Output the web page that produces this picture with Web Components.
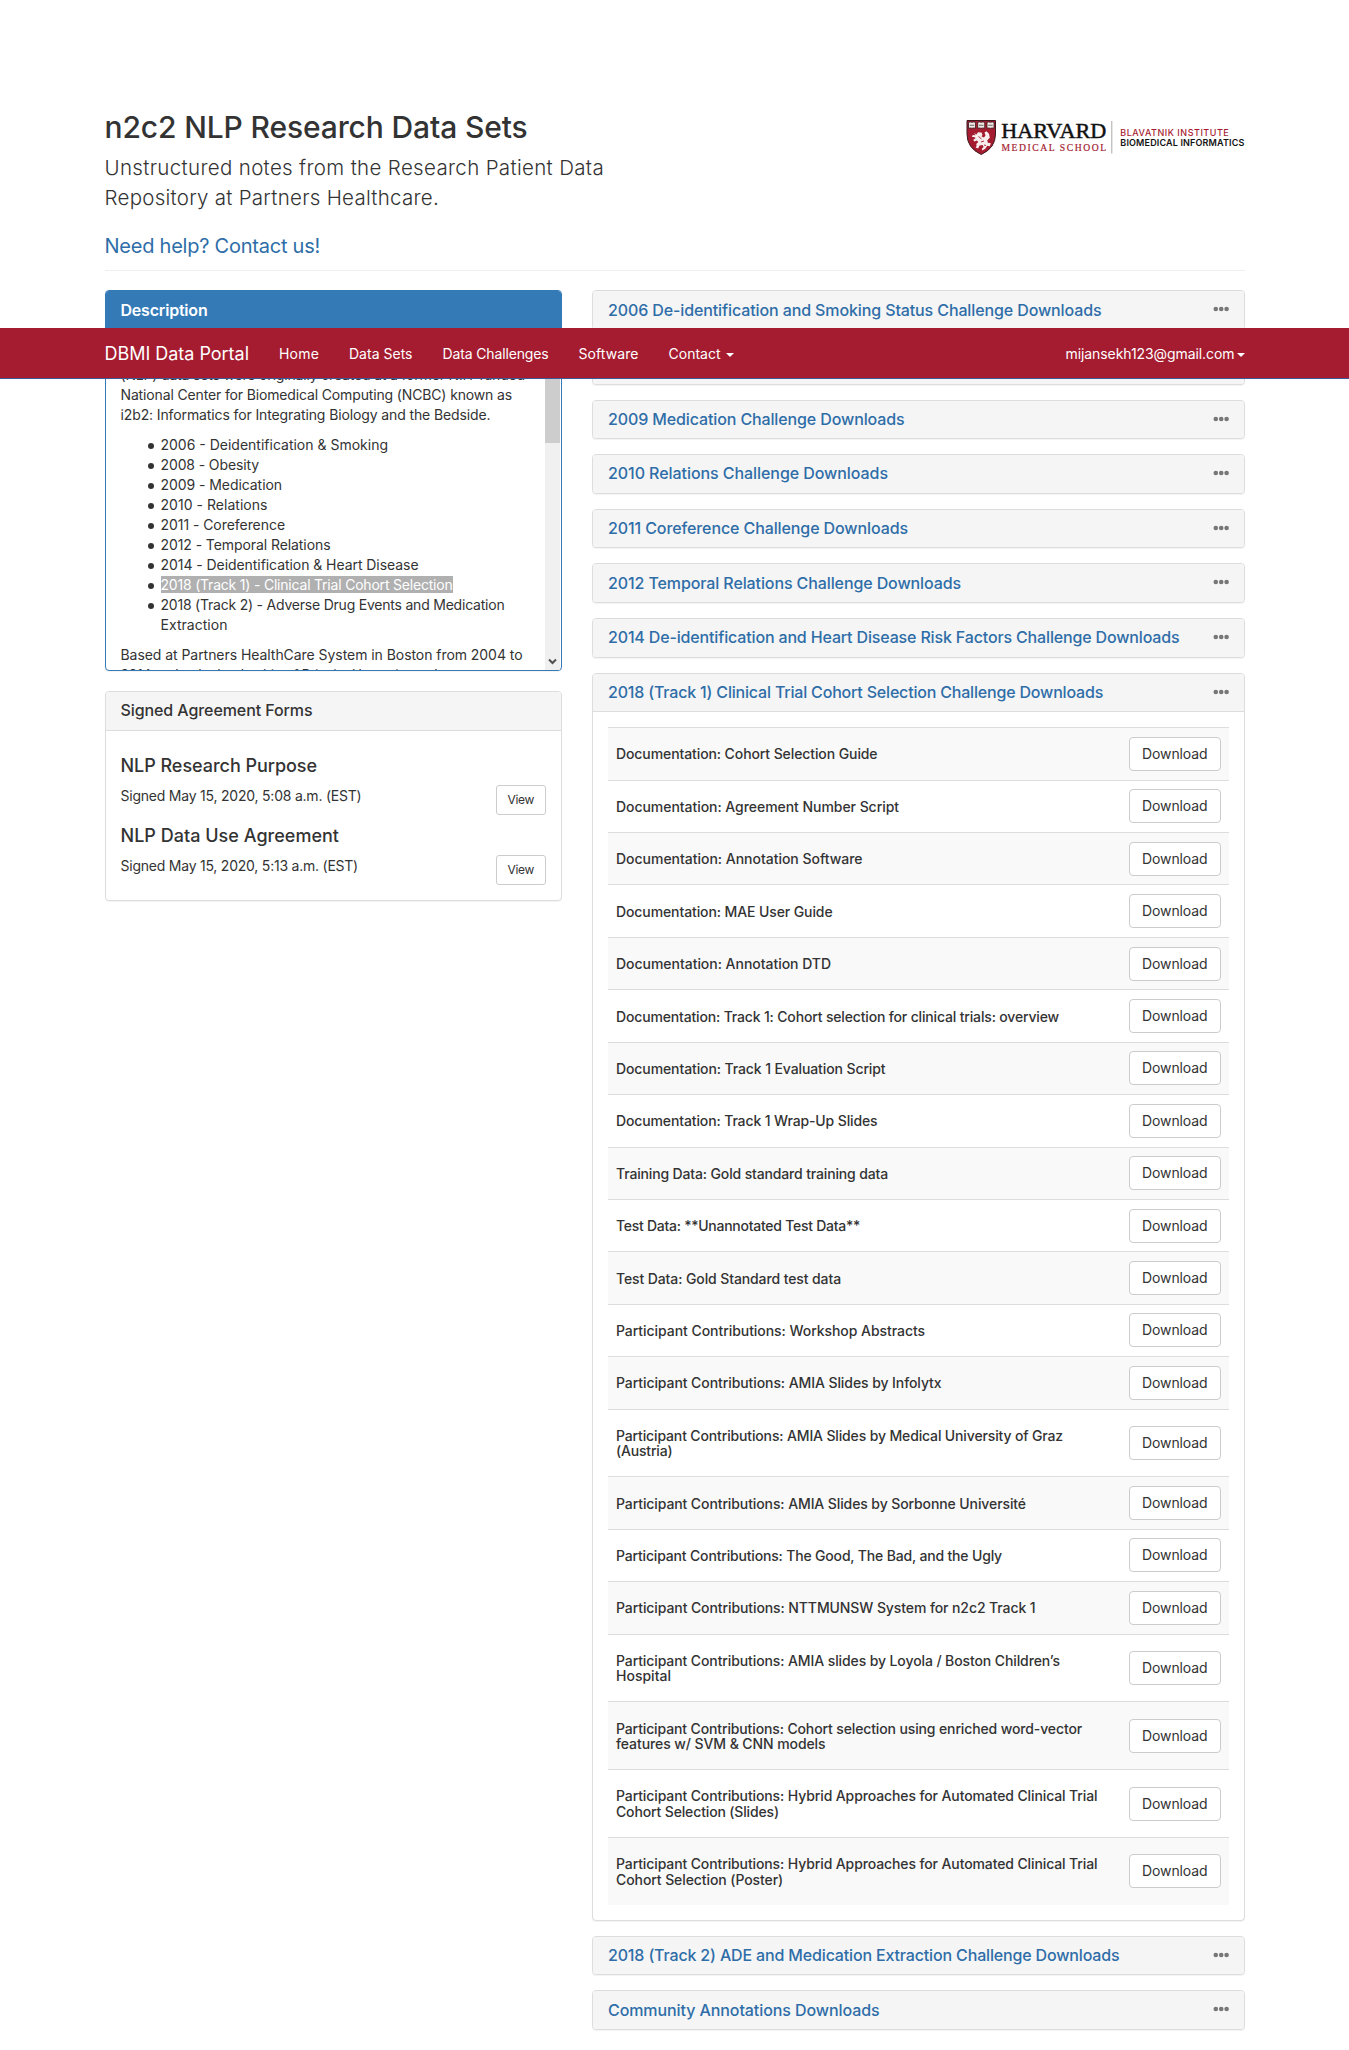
<!DOCTYPE html>
<html lang="en">
<head>
<meta charset="utf-8">
<title>DBMI Data Portal</title>
<style>
html,body{margin:0;padding:0;background:#fff}
body{font:14px/20px Inter,"Liberation Sans",sans-serif;color:#333;height:2050px;overflow:hidden}
</style>
</head>
<body>
<portal-page></portal-page>
<script>
const define = (name, html, setup) => customElements.define(name, class extends HTMLElement {
  connectedCallback() {
    if (this.shadowRoot) return;
    const root = this.attachShadow({mode: 'open'});
    root.innerHTML = typeof html === 'function' ? html(this) : html;
    if (setup) setup(this, root);
  }
});

/* One line of type tracked to a given advance width. */
define('fit-text', '<style>:host{display:inline;white-space:nowrap}</style><slot></slot>', el => {
  const target = parseFloat(el.getAttribute('w')) - 1;
  const natural = el.getBoundingClientRect().width;
  const n = el.textContent.length;
  if (target && natural) el.style.letterSpacing = ((target - natural) / n).toFixed(4) + 'px';
});

define('hms-logo', `<style>:host{display:block;width:278.500px;height:36px}svg{display:block;overflow:visible}</style>
<svg width="278.500" height="36" viewBox="0 0 278.500 36">
 <path d="M1 .5H29.500V14Q29.500 28 15.200 34.500Q1 28 1 14Z" fill="#a51c30" stroke="#3c1a20" stroke-width="1"/>
 <g fill="#f3e9e6" stroke="#33151a" stroke-width=".8">
  <path d="M2.500 2.300q1.800-.7 3.500 0q1.700-.7 3.500 0v6q-1.700-.7-3.500 0q-1.700-.7-3.500 0z"/>
  <path d="M11.700 2.300q1.800-.7 3.500 0q1.700-.7 3.500 0v6q-1.700-.7-3.500 0q-1.700-.7-3.500 0z"/>
  <path d="M21 2.300q1.800-.7 3.500 0q1.700-.7 3.500 0v6q-1.700-.7-3.500 0q-1.700-.7-3.500 0z"/></g>
 <path d="M3.800 5.300h4.500M13 5.300h4.500M22.200 5.300h4.500" stroke="#666" stroke-width="1.100"/>
 <path d="M8 13l2.500 1.500 1.500-2.300 3.500.3 1 2.300-1 1.800 2.500.8 1.500-2-1-3 2-1.200 2.500 2.500.8 4-2.500 2.500.5 2.500 3 .5-1 3-2.500-.5-2 3-3 1.800-.5-1.800 1.800-1.800-1-2-3 .5-1.500 3-2.500-.8 1-1.500-.3-2.200 2-2-1.500-1.500-2.300 1-1.300-1.500 2.500-1.800-1.800-1.200-2 .2.800-2.100 3 .2z" fill="#f8eeee"/>
 <path d="M12.500 16.500l3 2.500M15 22l3-1M18 25l2 .5" stroke="#a51c30" stroke-width=".9"/>
 <g font-family="'Liberation Serif',serif">
  <text x="35.300" y="17.500" font-size="20.500" textLength="105" lengthAdjust="spacingAndGlyphs" fill="#111" stroke="#111" stroke-width=".45">HARVARD</text>
  <text x="35.500" y="30.500" font-size="9.600" textLength="104.500" fill="#a51c30" stroke="#a51c30" stroke-width=".2">MEDICAL SCHOOL</text></g>
 <path d="M145.800 1V33.500" stroke="#aaa"/>
 <g font-family="Inter,sans-serif" font-size="9">
  <text x="154.300" y="15.800" textLength="108.500" fill="#a51c30" font-weight="500">BLAVATNIK INSTITUTE</text>
  <text x="154.300" y="25.600" textLength="124" fill="#111" font-weight="600">BIOMEDICAL INFORMATICS</text></g>
</svg>`);

define('page-intro', `<style>
:host{display:block;border-bottom:1px solid #eee;height:158.600px;padding-top:111px}
.row{display:flex;justify-content:space-between;align-items:flex-start}
h1{font-weight:500;font-size:30px;line-height:33px;margin:0 0 9px}
p{margin:0;font-size:20.500px;line-height:30px;font-weight:300}
a{display:block;margin-top:20.500px;font-size:20px;line-height:24px;color:#2e6da8;font-weight:400}
hms-logo{margin-top:8.500px}
</style>
<div class="row"><div>
<h1><fit-text w="424">n2c2 NLP Research Data Sets</fit-text></h1>
<p><fit-text w="500.500">Unstructured notes from the Research Patient Data</fit-text><br><fit-text w="335.500">Repository at Partners Healthcare.</fit-text></p>
<a><fit-text w="216.500">Need help? Contact us!</fit-text></a>
</div><hms-logo></hms-logo></div>`);

define('nav-link', el => `<style>
:host{display:flex;align-items:center;color:#fff;gap:${el.getAttribute('gap') || 5}px}
i{width:0;height:0;border:4px solid transparent;border-top-color:#fff;border-bottom:0;margin-top:1px}
</style><slot></slot>${el.hasAttribute('caret') ? '<i></i>' : ''}`);

define('portal-nav', `<style>
:host{display:block;position:absolute;left:0;right:0;top:328px;z-index:5;height:50px;background:#a51c30;border-bottom:1px solid #3d5a98}
.in{display:flex;width:1140px;height:50px;box-sizing:border-box;padding-top:2px;margin:0 auto;align-items:center;gap:30px}
.brand{font-size:18px}
.user{margin-left:auto}
</style>
<div class="in">
<nav-link class="brand"><fit-text w="145.500">DBMI Data Portal</fit-text></nav-link>
<nav-link><fit-text w="41">Home</fit-text></nav-link>
<nav-link><fit-text w="64.500">Data Sets</fit-text></nav-link>
<nav-link><fit-text w="107">Data Challenges</fit-text></nav-link>
<nav-link><fit-text w="61">Software</fit-text></nav-link>
<nav-link caret><fit-text w="53">Contact</fit-text></nav-link>
<nav-link class="user" caret gap="2"><fit-text w="170">mijansekh123@gmail.com</fit-text></nav-link>
</div>`);

define('ui-panel', el => `<style>
:host{display:block;box-sizing:border-box;border:1px solid #ddd;border-radius:4px;background:#fff;box-shadow:0 1px 1px rgba(0,0,0,.05);overflow:hidden}
:host([primary]){border-color:#337ab7}
header{display:flex;justify-content:space-between;align-items:flex-start;box-sizing:content-box;padding:10.250px 15px 9.750px;background:#f5f5f5;font-size:16px;line-height:17.600px;height:17.610px;font-weight:500}
:host([open]) header{border-bottom:1px solid #ddd}
:host([open]:not([link]):not([primary])) header{padding:9.750px 15px 10.250px}
:host([primary]) header{background:#337ab7;border-color:#337ab7;color:#fff;font-weight:600}
:host([link]) header{color:#2e6da8}
svg{display:block;margin-top:4.700px}
</style><header><slot name="title"></slot>${el.hasAttribute('link') ? '<svg width="16" height="6"><g fill="#777"><circle cx="2.800" cy="3" r="2.300"/><circle cx="8.200" cy="3" r="2.300"/><circle cx="13.600" cy="3" r="2.300"/></g></svg>' : ''}</header><slot></slot>`);

define('ui-button', `<style>
:host{display:block;box-sizing:border-box;border:1px solid #ccc;border-radius:4px;background:#fff;padding:6px 12px;font-size:14px;line-height:20px;height:34px}
:host([small]){font-size:12px;line-height:18px;padding:5px 11px;height:30px;border-radius:3px}
</style><slot></slot>`);

define('scroll-bar', `<style>
:host{display:flex;flex-direction:column;width:15px;margin-right:1px;background:#f0f0f0;align-items:center}
.thumb{width:15px;height:96px;margin-top:17px;background:#cdcdcd}
svg{margin-top:auto;margin-bottom:4.500px}
</style><div class="thumb"></div><svg width="9" height="7"><path d="M1 1.500L4.500 5 8 1.500" fill="none" stroke="#505050" stroke-width="2"/></svg>`);

define('description-body', `<style>
:host{display:flex;height:339.800px;overflow:hidden}
.text{flex:1;padding:15px;min-width:0}
p{margin:0 0 10px}
ul{margin:0 0 10px;padding-left:40px;list-style:none}
li::before{content:"";display:inline-block;width:6px;height:6px;border-radius:50%;background:#333;margin:0 7px 1.500px -13px}
mark{background:#b0b0b0;color:#fff}
</style>
<div class="text">
<p><br>
<fit-text w="405.500">(NLP) data sets were originally created at a former NIH-funded</fit-text><br>
<fit-text w="392.500">National Center for Biomedical Computing (NCBC) known as</fit-text><br>
<fit-text w="371">i2b2: Informatics for Integrating Biology and the Bedside.</fit-text></p>
<ul>
<li><fit-text w="228.500">2006 - Deidentification &amp; Smoking</fit-text></li>
<li><fit-text w="99.500">2008 - Obesity</fit-text></li>
<li><fit-text w="122.500">2009 - Medication</fit-text></li>
<li><fit-text w="108">2010 - Relations</fit-text></li>
<li><fit-text w="125.500">2011 - Coreference</fit-text></li>
<li><fit-text w="171">2012 - Temporal Relations</fit-text></li>
<li><fit-text w="259">2014 - Deidentification &amp; Heart Disease</fit-text></li>
<li><mark><fit-text w="293">2018 (Track 1) - Clinical Trial Cohort Selection</fit-text></mark></li>
<li><fit-text w="345">2018 (Track 2) - Adverse Drug Events and Medication</fit-text><br><fit-text w="68">Extraction</fit-text></li>
</ul>
<p><fit-text w="403">Based at Partners HealthCare System in Boston from 2004 to</fit-text><br>
<fit-text w="347">2014 under the leadership of Principal Investigator Isaac</fit-text></p>
</div><scroll-bar></scroll-bar>`);

define('signed-form', `<style>
:host{display:block;height:70px}
h4{font-weight:500;font-size:18px;line-height:19.800px;margin:0 0 9.600px}
div{display:flex;justify-content:space-between;align-items:flex-start}
span{padding-top:.4px}
</style><h4><slot name="name"></slot></h4><div><span><slot></slot></span><ui-button small><fit-text w="27.500">View</fit-text></ui-button></div>`);

define('download-row', `<style>
:host{display:flex;align-items:center;justify-content:space-between;border-top:1px solid #ddd;padding:8px;font-weight:500;line-height:15.400px}
:host([striped]){background:#f9f9f9}
.t{padding:10.210px 0 9.810px}
ui-button{font-weight:400}
</style><div class="t"><slot></slot></div><ui-button><fit-text w="66.500">Download</fit-text></ui-button>`);

const rows = [
 [['Documentation: Cohort Selection Guide',262.5]],
 [['Documentation: Agreement Number Script',284]],
 [['Documentation: Annotation Software',247.5]],
 [['Documentation: MAE User Guide',217.5]],
 [['Documentation: Annotation DTD',216]],
 [['Documentation: Track 1: Cohort selection for clinical trials: overview',444]],
 [['Documentation: Track 1 Evaluation Script',270.5]],
 [['Documentation: Track 1 Wrap-Up Slides',262.5]],
 [['Training Data: Gold standard training data',273]],
 [['Test Data: **Unannotated Test Data**',245]],
 [['Test Data: Gold Standard test data',226]],
 [['Participant Contributions: Workshop Abstracts',310]],
 [['Participant Contributions: AMIA Slides by Infolytx',326.5]],
 [['Participant Contributions: AMIA Slides by Medical University of Graz',448],['(Austria)',57.5]],
 [['Participant Contributions: AMIA Slides by Sorbonne Université',411]],
 [['Participant Contributions: The Good, The Bad, and the Ugly',387]],
 [['Participant Contributions: NTTMUNSW System for n2c2 Track 1',420.5]],
 [['Participant Contributions: AMIA slides by Loyola / Boston Children’s',445],['Hospital',56]],
 [['Participant Contributions: Cohort selection using enriched word-vector',467],['features w/ SVM &amp; CNN models',210.5]],
 [['Participant Contributions: Hybrid Approaches for Automated Clinical Trial',482.5],['Cohort Selection (Slides)',164]],
 [['Participant Contributions: Hybrid Approaches for Automated Clinical Trial',482.5],['Cohort Selection (Poster)',168]]
];
const fit = ([t, w]) => `<fit-text w="${w}">${t}</fit-text>`;

define('download-list', `<style>:host{display:block;padding:15px}</style>${rows.map((r, i) => `<download-row${i % 2 ? '' : ' striped'}>${r.map(fit).join('<br>')}</download-row>`).join('')}`);

const groups = [
 ['2006 De-identification and Smoking Status Challenge Downloads',494.5],
 ['',0],
 ['2009 Medication Challenge Downloads',297.5],
 ['2010 Relations Challenge Downloads',281],
 ['2011 Coreference Challenge Downloads',301],
 ['2012 Temporal Relations Challenge Downloads',354],
 ['2014 De-identification and Heart Disease Risk Factors Challenge Downloads',572.5],
 ['2018 (Track 1) Clinical Trial Cohort Selection Challenge Downloads',496,true],
 ['2018 (Track 2) ADE and Medication Extraction Challenge Downloads',512.5],
 ['Community Annotations Downloads',272.5]
];

define('portal-page', `<style>
:host{display:block}
main{width:1140px;margin:0 auto}
.cols{display:flex;gap:30px;margin-top:19.800px;align-items:flex-start}
.left{width:457.500px;display:flex;flex-direction:column;gap:20.400px}
.right{width:652.500px;display:flex;flex-direction:column;gap:15px}
.forms{padding:25px 15px 4.400px}
</style>
<main><page-intro></page-intro>
<div class="cols">
<div class="left">
<ui-panel primary open><fit-text slot="title" w="88">Description</fit-text><description-body></description-body></ui-panel>
<ui-panel open><fit-text slot="title" w="193">Signed Agreement Forms</fit-text>
<div class="forms">
<signed-form><fit-text slot="name" w="197.500">NLP Research Purpose</fit-text><fit-text w="242">Signed May 15, 2020, 5:08 a.m. (EST)</fit-text></signed-form>
<signed-form><fit-text slot="name" w="219.500">NLP Data Use Agreement</fit-text><fit-text w="238.500">Signed May 15, 2020, 5:13 a.m. (EST)</fit-text></signed-form>
</div></ui-panel>
</div>
<div class="right">${groups.map(([t, w, open]) => `<ui-panel link${open ? ' open' : ''}><fit-text slot="title" w="${w}">${t}</fit-text>${open ? '<download-list></download-list>' : ''}</ui-panel>`).join('')}</div>
</div></main>
<portal-nav></portal-nav>`);
</script>
</body>
</html>
